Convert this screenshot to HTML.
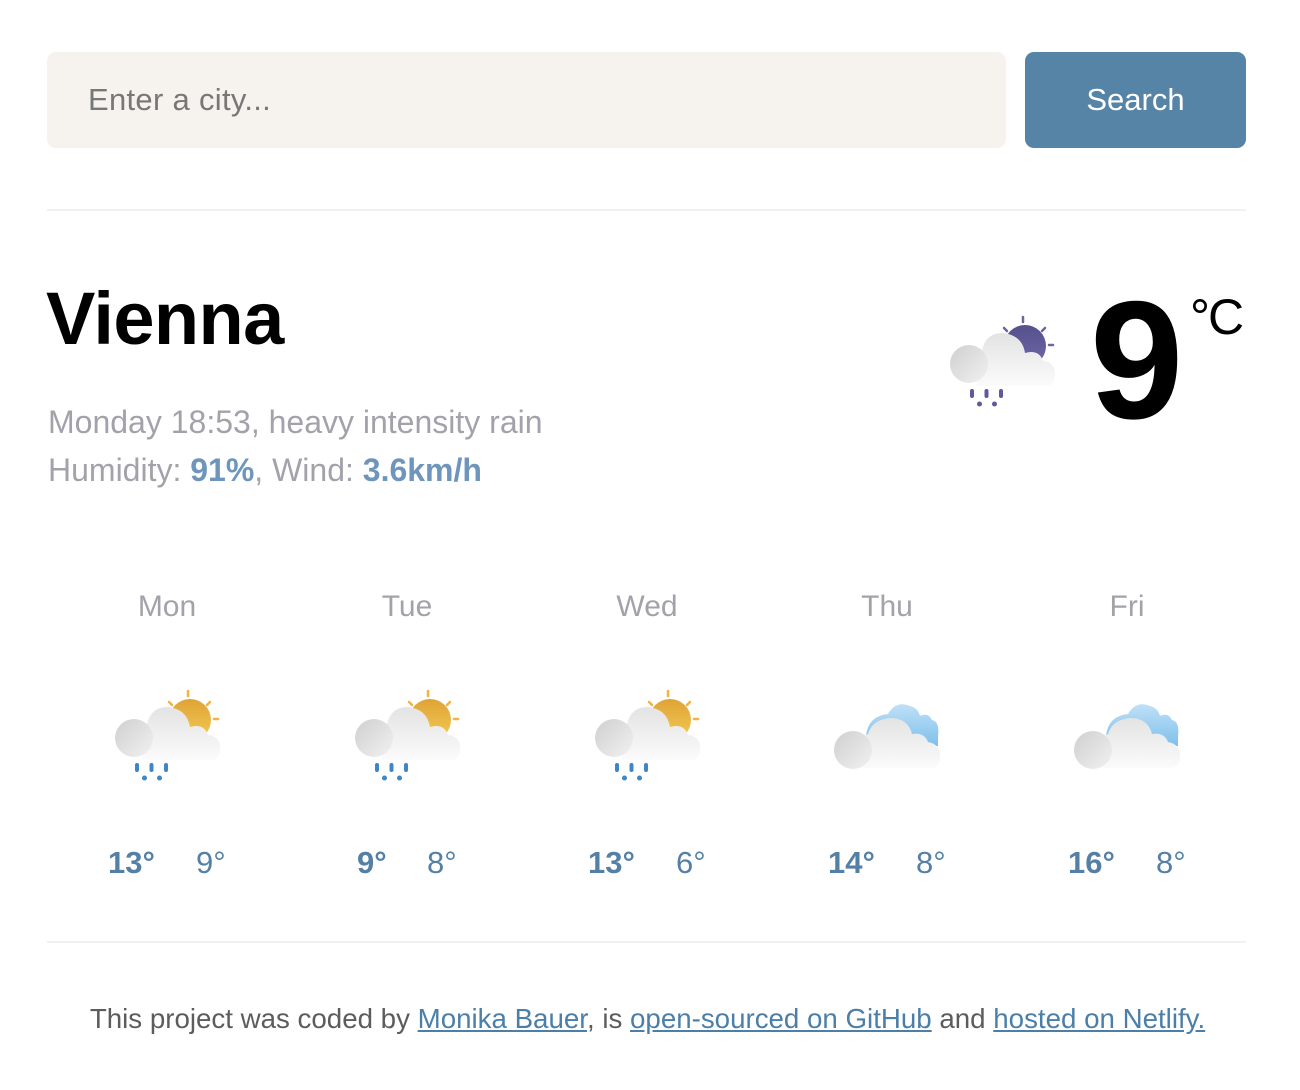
<!DOCTYPE html>
<html><head><meta charset="utf-8">
<style>
*{margin:0;padding:0;box-sizing:border-box}
body{width:1300px;height:1090px;background:#fff;font-family:"Liberation Sans",sans-serif;position:relative;overflow:hidden}
.abs{position:absolute;white-space:nowrap}
.input{left:47px;top:52px;width:959px;height:96px;background:#f6f3ee;border-radius:9px}
.ph{left:88px;top:82px;font-size:31px;color:#777;letter-spacing:0.3px}
.btn{left:1025px;top:52px;width:221px;height:96px;background:#5584a6;border-radius:9px;color:#fff;font-size:31px;text-align:center;line-height:96px;letter-spacing:0}
.hr{left:47px;width:1199px;height:2px;background:#f0f0f0}
.city{left:46px;top:276px;font-size:74px;font-weight:bold;color:#000;letter-spacing:-0.6px}
.sub{left:48px;font-size:32px;color:#a3a2ab;letter-spacing:0}
.sub b{color:#6e95bb}
.big{left:1090px;top:276px;font-size:168px;font-weight:bold;line-height:1;color:#000}
.unit{left:1190px;top:288px;font-size:50px;color:#000;letter-spacing:-2px}
.day{width:240px;text-align:center;top:590px;font-size:30px;color:#a2a2aa;letter-spacing:0}
.temps{top:845px;font-size:31px;color:#5580a6}
.temps b{font-weight:bold}
.foot{left:0;width:1295px;text-align:center;top:1003px;font-size:27.7px;color:#5c5c5c;letter-spacing:0}
.foot a{color:#4c7fa8;text-decoration:underline}
</style></head><body>
<svg width="0" height="0" style="position:absolute">
<defs>
<linearGradient id="sunG" x1="0" y1="0" x2="0" y2="1"><stop offset="0" stop-color="#dfa336"/><stop offset="1" stop-color="#f3cc55"/></linearGradient>
<linearGradient id="sunP" x1="0" y1="0" x2="0" y2="1"><stop offset="0" stop-color="#55508c"/><stop offset="1" stop-color="#6e6aa8"/></linearGradient>
<linearGradient id="clG" x1="0" y1="0" x2="0" y2="1"><stop offset="0" stop-color="#e3e3e3"/><stop offset="1" stop-color="#fbfbfb"/></linearGradient>
<linearGradient id="clL" x1="0" y1="0" x2="1" y2="1"><stop offset="0" stop-color="#cfcfcf"/><stop offset="1" stop-color="#f1f1f1"/></linearGradient>
<linearGradient id="blG" x1="0" y1="0" x2="0" y2="1"><stop offset="0" stop-color="#bfe0f7"/><stop offset="1" stop-color="#7fc0ec"/></linearGradient>
<symbol id="rain" viewBox="0 0 112 100">
<circle cx="80" cy="35" r="21" fill="url(#sunG)"/>
<g stroke="#f0b444" stroke-width="2.5" stroke-linecap="round"><line x1="78" y1="6" x2="78" y2="11"/><line x1="59" y1="17" x2="62" y2="20"/><line x1="100" y1="17" x2="97" y2="20"/><line x1="104" y1="34" x2="108" y2="34"/></g>
<path d="M32 75 L100 75 Q110 75 110 63 Q110 51 98 50 Q94 38 80 42 Q77 24 58 22 Q40 22 37 40 Q30 45 30 55 Z" fill="url(#clG)"/>
<circle cx="24" cy="53" r="19" fill="url(#clL)"/>
<g fill="#3f86c4"><rect x="25" y="78" width="4" height="9" rx="2"/><rect x="39.5" y="78" width="4" height="9" rx="2"/><rect x="54" y="78" width="4" height="9" rx="2"/><circle cx="34.5" cy="93" r="2.5"/><circle cx="49.5" cy="93" r="2.5"/></g>
</symbol>
<symbol id="rainP" viewBox="0 0 112 100">
<circle cx="80" cy="35" r="21" fill="url(#sunP)"/>
<g stroke="#6a66a4" stroke-width="2.5" stroke-linecap="round"><line x1="78" y1="6" x2="78" y2="11"/><line x1="59" y1="17" x2="62" y2="20"/><line x1="100" y1="17" x2="97" y2="20"/><line x1="104" y1="34" x2="108" y2="34"/></g>
<path d="M32 75 L100 75 Q110 75 110 63 Q110 51 98 50 Q94 38 80 42 Q77 24 58 22 Q40 22 37 40 Q30 45 30 55 Z" fill="url(#clG)"/>
<circle cx="24" cy="53" r="19" fill="url(#clL)"/>
<g fill="#5f5a9c"><rect x="25" y="78" width="4" height="9" rx="2"/><rect x="39.5" y="78" width="4" height="9" rx="2"/><rect x="54" y="78" width="4" height="9" rx="2"/><circle cx="34.5" cy="93" r="2.5"/><circle cx="49.5" cy="93" r="2.5"/></g>
</symbol>
<symbol id="cloud" viewBox="0 0 112 100">
<path d="M36 50 Q38 30 58 28 Q66 14 80 20 Q88 22 90 30 Q98 26 102 34 Q110 36 108 50 L108 60 L40 60 Z" fill="url(#blG)"/>
<path d="M32 82 L100 82 Q110 82 110 70 Q110 58 98 56 Q94 46 82 48 Q78 32 60 32 Q42 34 38 48 Q30 52 30 62 Z" fill="url(#clG)"/>
<circle cx="23" cy="64" r="19" fill="url(#clL)"/>
</symbol>
</defs></svg>

<div class="abs input"></div>
<div class="abs ph">Enter a city...</div>
<div class="abs btn">Search</div>
<div class="abs hr" style="top:209px"></div>

<div class="abs city">Vienna</div>
<div class="abs sub" style="top:404px">Monday 18:53, heavy intensity rain</div>
<div class="abs sub" style="top:452px">Humidity: <b>91%</b>, Wind: <b>3.6km/h</b></div>

<svg class="abs" style="left:945px;top:311px" width="112" height="100"><use href="#rainP"/></svg>
<div class="abs big">9</div>
<div class="abs unit">°C</div>

<div class="abs day" style="left:47px">Mon</div>
<div class="abs day" style="left:287px">Tue</div>
<div class="abs day" style="left:527px">Wed</div>
<div class="abs day" style="left:767px">Thu</div>
<div class="abs day" style="left:1007px">Fri</div>

<svg class="abs" style="left:110px;top:685px" width="112" height="100"><use href="#rain"/></svg>
<svg class="abs" style="left:350px;top:685px" width="112" height="100"><use href="#rain"/></svg>
<svg class="abs" style="left:590px;top:685px" width="112" height="100"><use href="#rain"/></svg>
<svg class="abs" style="left:830px;top:686px" width="112" height="100"><use href="#cloud"/></svg>
<svg class="abs" style="left:1070px;top:686px" width="112" height="100"><use href="#cloud"/></svg>

<div class="abs temps" style="left:108px"><b>13°</b></div><div class="abs temps" style="left:196px">9°</div>
<div class="abs temps" style="left:357px"><b>9°</b></div><div class="abs temps" style="left:427px">8°</div>
<div class="abs temps" style="left:588px"><b>13°</b></div><div class="abs temps" style="left:676px">6°</div>
<div class="abs temps" style="left:828px"><b>14°</b></div><div class="abs temps" style="left:916px">8°</div>
<div class="abs temps" style="left:1068px"><b>16°</b></div><div class="abs temps" style="left:1156px">8°</div>

<div class="abs hr" style="top:941px"></div>
<div class="abs foot">This project was coded by <a>Monika Bauer</a>, is <a>open-sourced on GitHub</a> and <a>hosted on Netlify.</a></div>
</body></html>
